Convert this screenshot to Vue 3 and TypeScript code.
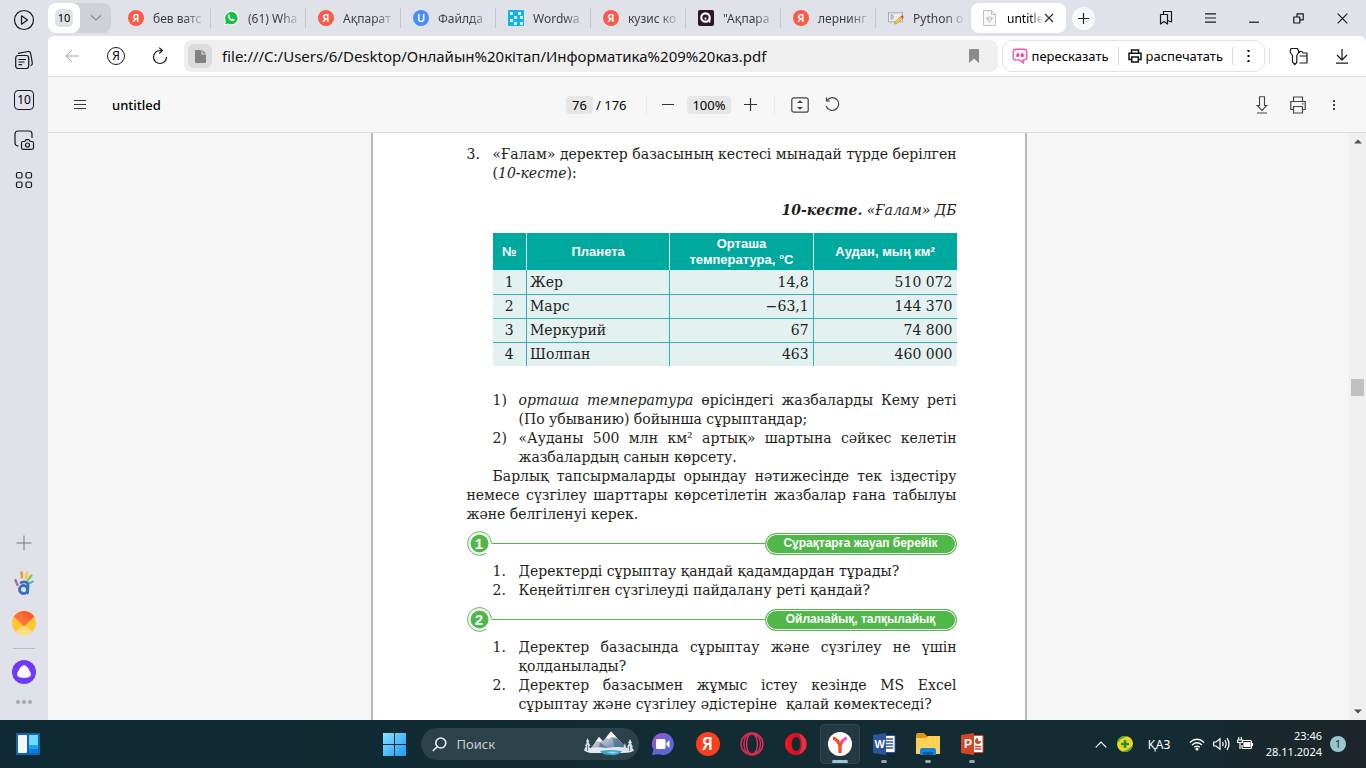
<script setup lang="ts">
import { ref } from 'vue'

type TabIcon = 'ya' | 'whatsapp' | 'u' | 'wordwall' | 'quiz' | 'python'
interface Tab { title: string; icon: TabIcon }
interface Planet { name: string; temp: string; area: string }

const tabs: Tab[] = [
  { title: 'бев ватс', icon: 'ya' },
  { title: '(61) Wha', icon: 'whatsapp' },
  { title: 'Ақпарат', icon: 'ya' },
  { title: 'Файлда', icon: 'u' },
  { title: 'Wordwa', icon: 'wordwall' },
  { title: 'кузис ко', icon: 'ya' },
  { title: '"Ақпара', icon: 'quiz' },
  { title: 'лернинг', icon: 'ya' },
  { title: 'Python о', icon: 'python' },
]

const planets: Planet[] = [
  { name: 'Жер', temp: '14,8', area: '510 072' },
  { name: 'Марс', temp: '−63,1', area: '144 370' },
  { name: 'Меркурий', temp: '67', area: '74 800' },
  { name: 'Шолпан', temp: '463', area: '460 000' },
]

const address = ref('file:///C:/Users/6/Desktop/Онлайын%20кітап/Информатика%209%20каз.pdf')
const page = ref('76')
const query = ref('')
</script>

<template>
  <div class="desktop">
    <div class="browser">
      <aside class="rail">
        <button class="rail-btn" aria-label="Видео"><svg width="22" height="22" viewBox="0 0 22 22" class="ln"><circle cx="11" cy="11" r="9.5" /><path d="M8.5 6.8v8.4l6-4.2z" /></svg></button>
        <button class="rail-btn" aria-label="Лента"><svg width="20" height="20" viewBox="0 0 20 20" class="ln"><rect x="1.7" y="5.5" width="13" height="13" rx="2.5" /><path d="M4.5 9.5h7.5M4.5 12h6M4.5 14.7h3.5M4 3.3l10-1.8q2.3-.3 2.7 2l1.6 9.5q.2 2-1.6 2.7" /></svg></button>
        <button class="rail-btn" aria-label="Вкладки"><span class="count">10</span></button>
        <button class="rail-btn" aria-label="Скриншот"><svg width="22" height="22" viewBox="0 0 22 22" class="ln"><path d="M5.5 17H5a3 3 0 0 1-3-3V5a3 3 0 0 1 3-3h11a3 3 0 0 1 3 3v4" /><path d="M10 12.5h1.8l1.1-1.8h3.2l1.1 1.8H19q1.5 0 1.5 1.5v4.8q0 1.5-1.5 1.5h-9q-1.500 0-1.500-1.500V14q0-1.500 1.500-1.500z" /><circle cx="14.500" cy="16" r="2" /></svg></button>
        <button class="rail-btn" aria-label="Сервисы"><svg width="18" height="18" viewBox="0 0 18 18" class="ln"><rect x="1.500" y="1.500" width="5.500" height="5.500" rx="1.500" /><rect x="11" y="1.500" width="5.500" height="5.500" rx="1.500" /><rect x="1.500" y="11" width="5.500" height="5.500" rx="1.500" /><rect x="11" y="11" width="5.500" height="5.500" rx="1.500" /></svg></button>
        <span class="grow"></span>
        <button class="rail-btn" aria-label="Добавить"><svg width="16" height="16" viewBox="0 0 16 16" stroke="#777b80"><path d="M8 .5v15M.5 8h15" /></svg></button>
        <button class="rail-btn" aria-label="Закладка">
          <svg width="20" height="26" viewBox="0 0 20 26" fill="none" stroke-linecap="round">
            <path d="M7.500 2.500l.5 5" stroke="#ec9a3c" stroke-width="2.600" /><path d="M13 2.500l-1 5.500" stroke="#f5cf34" stroke-width="2.600" /><path d="M17.500 5.500l-3.500 4.500" stroke="#8bc34a" stroke-width="2.200" /><path d="M19 11.500l-3 1.500" stroke="#4cb8e6" stroke-width="2" /><path d="M1.500 10l2 5" stroke="#a36bb0" stroke-width="2.400" />
            <ellipse cx="9.500" cy="19.500" rx="4" ry="4" stroke="#3a70b8" stroke-width="2.800" /><path d="M7 12.500q7.500-2.500 7 4l-.5 6.500" stroke="#3a70b8" stroke-width="2.800" />
          </svg>
        </button>
        <button class="rail-btn" aria-label="Почта">
          <svg width="24" height="24" viewBox="0 0 24 24"><defs><clipPath id="mailClip"><circle cx="12" cy="12" r="12" /></clipPath><linearGradient id="mailTop" x1="1" y1="0" x2="0" y2="1"><stop offset="0" stop-color="#ff4a1c" /><stop offset="1" stop-color="#ff9150" /></linearGradient></defs>
            <g clip-path="url(#mailClip)"><path d="M0 0h24v24H0z" fill="#ffc82e" /><path d="M0 24l12-10 12 10z" fill="#ffdf80" /><path d="M0 4L12 15.500 24 4V0H0z" fill="url(#mailTop)" /></g></svg>
        </button>
        <span class="rail-rule"></span>
        <button class="rail-btn" aria-label="Алиса"><svg width="24" height="24" viewBox="0 0 24 24"><circle cx="12" cy="12" r="12" fill="#7037fc" /><path d="M12 5c2.500 0 7 7 7 9.600 0 2.400-3.500 3.400-7 3.400s-7-1-7-3.400C5 12 9.500 5 12 5z" fill="#fff" /></svg></button>
        <button class="rail-btn low" aria-label="Ещё"><svg width="16" height="4" viewBox="0 0 16 4" fill="#a6aaae"><circle cx="2" cy="2" r="2" /><circle cx="8" cy="2" r="2" /><circle cx="14" cy="2" r="2" /></svg></button>
      </aside>

      <div class="main">
        <nav class="tabs">
          <div class="group">
            <button class="group-count"><span>10</span></button>
            <button class="group-arrow" aria-label="Группы вкладок"><svg width="12" height="8" viewBox="0 0 12 8" fill="none" stroke="#85898e" stroke-width="1.200"><path d="M1 1.500l5 4.500 5-4.500" /></svg></button>
          </div>
          <button v-for="(tab, i) in tabs" :key="i" class="tab">
            <span v-if="tab.icon === 'ya'" class="disc red">Я</span>
            <span v-else-if="tab.icon === 'u'" class="disc blue">U</span>
            <svg v-else-if="tab.icon === 'whatsapp'" width="16" height="16" viewBox="0 0 16 16"><path d="M1 15.500l1-4A7.300 7.300 0 1 1 5 14.500z" fill="#fff" /><path d="M2.200 14.200l.8-3A6.200 6.200 0 1 1 5.200 13.400z" fill="#13c143" /><path d="M4.900 5.300q.7-1.300 1.300-.8l.8 1.700-.7.900q.8 1.700 2.500 2.400l.9-.9 1.900.9q.1 1.500-1.500 1.800C7.500 11.400 4.300 8 4.900 5.300z" fill="#fff" /></svg>
            <svg v-else-if="tab.icon === 'wordwall'" width="16" height="16" viewBox="0 0 16 16"><rect width="16" height="16" rx="1" fill="#12b2f0" /><g fill="#d9f4ff"><path d="M2 2h3v3H2zM10 2h3v3h-3zM6 6h3v3H6zM2 9h3v3H2zM12 6h3v3h-3zM6 12h3v3H6zM12 12h3v3h-3z" /></g></svg>
            <svg v-else-if="tab.icon === 'quiz'" width="16" height="16" viewBox="0 0 16 16"><rect width="16" height="16" rx="2" fill="#2d132c" /><circle cx="7.500" cy="7.500" r="4.200" fill="none" stroke="#fff" stroke-width="2.200" /><path d="M11.500 9v3.500M7.500 7.500v2" stroke="#fff" stroke-width="1.800" /></svg>
            <svg v-else width="17" height="16" viewBox="0 0 17 16"><rect x=".5" y="2.500" width="15" height="9.500" fill="#eceeef" stroke="#a3a7ab" /><path d="M2.500 5h3M2.500 7h4M2.500 9h3" stroke="#90959a" /><path d="M7 14.500l.6-2.700 6.500-6 2 2-6.400 6z" fill="#f1c93b" stroke="#b28a2a" stroke-width=".6" /><path d="M13.300 6.500l1.500-1.500 2 2-1.500 1.500z" fill="#d84a3d" /></svg>
            <span class="tab-title">{{ tab.title }}</span>
          </button>
          <div class="tab active">
            <svg width="13" height="16" viewBox="0 0 13 16" fill="none" stroke="#bfc3c7"><path d="M.5.500h8l4 4v11H.5z" fill="#f7f7f7" /><path d="M8.500.500v4h4" /><path d="M3.500 8q3-2.500 6 0L6.500 12.500zM3.500 8l3 1.500 3-1.500" /></svg>
            <span class="tab-title">untitle</span>
            <button class="tab-close" aria-label="Закрыть вкладку"><svg width="10" height="10" viewBox="0 0 10 10" stroke="#2c2f33" stroke-width="1.200"><path d="M1 1l8 8M9 1L1 9" /></svg></button>
          </div>
          <button class="new-tab" aria-label="Новая вкладка"><svg width="11" height="11" viewBox="0 0 11 11" stroke="#24272b" stroke-width="1.200"><path d="M5.500 0v11M0 5.500h11" /></svg></button>
          <span class="grow"></span>
          <div class="window-btns">
            <button aria-label="Закладки"><svg width="14" height="16" viewBox="0 0 14 16" class="ln"><path d="M1.500 4.500h7V14L5 11.500 1.500 14z" /><path d="M4.500 4.500V1.500h8V12l-4-1.500" /></svg></button>
            <button aria-label="Меню"><svg width="11" height="10" viewBox="0 0 11 10" class="ln"><path d="M0 .8h11M0 5h11M0 9.200h11" /></svg></button>
            <button aria-label="Свернуть"><svg width="10" height="10" viewBox="0 0 10 10" class="ln"><path d="M0 9.200h10" /></svg></button>
            <button aria-label="Окно"><svg width="11" height="11" viewBox="0 0 11 11" class="ln"><path d="M.8 4h6v6h-6zM4 4V.8h6.200v6H6.800" /></svg></button>
            <button aria-label="Закрыть"><svg width="11" height="11" viewBox="0 0 11 11" class="ln"><path d="M.7.700l9.600 9.600M10.300.700L.7 10.300" /></svg></button>
          </div>
        </nav>

        <div class="toolbar">
          <button class="tool" aria-label="Назад"><svg width="14" height="14" viewBox="0 0 14 14" fill="none" stroke="#a9a9a9"><path d="M14 7H1M7 1L1 7l6 6" /></svg></button>
          <button class="tool" aria-label="Яндекс"><span class="ya-ring">Я</span></button>
          <button class="tool" aria-label="Обновить"><svg width="16" height="18" viewBox="0 0 16 18" class="ln"><path d="M9.500 3.500H8a6.500 6.500 0 1 0 6.500 6.500M7.200.600l3.300 2.900-3.300 3" /></svg></button>
          <div class="address">
            <button class="file" aria-label="Сведения о файле"><svg width="11" height="13" viewBox="0 0 11 13"><path d="M1 0h5.500v4.500H11V12a1 1 0 0 1-1 1H1a1 1 0 0 1-1-1V1a1 1 0 0 1 1-1z" fill="#828282" /><path d="M7.500 0L11 3.500H7.500z" fill="#828282" /></svg></button>
            <input v-model="address" aria-label="Адрес" spellcheck="false" />
            <button class="mark" aria-label="В закладки"><svg width="10" height="14" viewBox="0 0 10 14"><path d="M1 0h8q1 0 1 1v13l-5-4.500L0 14V1q0-1 1-1z" fill="#8b8b8b" /></svg></button>
          </div>
          <div class="actions">
            <button class="act"><svg width="16" height="16" viewBox="0 0 16 16" fill="none"><path d="M4 1.200h8q2.800 0 2.800 2.600v5.500q0 2.600-2.800 2.600h-1l.2 3-3.500-3H4q-2.800 0-2.800-2.600V3.800q0-2.600 2.800-2.600z" stroke="#ef57b6" stroke-width="1.400" /><path d="M7 4.500Q4.300 5 4.500 8.500h2.600V6.300H5.900M11.400 4.500Q8.700 5 8.900 8.500h2.600V6.300h-1.200" fill="#f0429e" stroke="#f0429e" stroke-width=".6" /></svg>пересказать</button>
            <button class="act print"><svg width="14" height="14" viewBox="0 0 14 14" fill="none" stroke="#111" stroke-width="1.500"><path d="M3.500 4V1h7v3M3 10.500H1V4.200h12v6.300h-2" /><path d="M3.700 8h6.600v5H3.700z" fill="#fff" /></svg>распечатать</button>
            <button class="act dots" aria-label="Ещё"><svg width="3" height="12" viewBox="0 0 3 12"><path d="M.5 0h2v2h-2zM.5 5h2v2h-2zM.5 10h2v2h-2z" /></svg></button>
          </div>
          <span class="split"></span>
          <button class="tool key" aria-label="Пароли"><svg width="19" height="19" viewBox="0 0 19 19" class="ln"><path d="M2 1.500h6.500L10 5 7.800 8.500v7L5.800 17.500 3.500 15.200V8.500L1 5z" /><path d="M10.500 6V4.500h2.500l1 1.500h4v10h-7.500M10.500 9H18" /></svg></button>
          <button class="tool" aria-label="Загрузки"><svg width="12" height="15" viewBox="0 0 12 15" class="ln"><path d="M6 0v11M1 6l5 5 5-5M0 14.200h12" /></svg></button>
        </div>

        <div class="pdf-bar">
          <div class="pdf-left">
            <button aria-label="Боковая панель"><svg width="12" height="9" viewBox="0 0 12 9" stroke="#333"><path d="M0 .5h12M0 4.500h12M0 8.500h12" /></svg></button>
            <h1>untitled</h1>
          </div>
          <div class="pdf-mid">
            <input v-model="page" class="page-no" aria-label="Страница" />
            <span class="of">/ 176</span>
            <span class="bar-line"></span>
            <button class="zoom" aria-label="Уменьшить"><svg width="12" height="2" viewBox="0 0 12 2" fill="#333"><path d="M0 0h12v1H0z" /></svg></button>
            <span class="percent">100%</span>
            <button class="zoom" aria-label="Увеличить"><svg width="13" height="13" viewBox="0 0 13 13" stroke="#333" stroke-width="1.200"><path d="M6.500 0v13M0 6.500h13" /></svg></button>
            <span class="bar-line wide"></span>
            <button class="fit" aria-label="По размеру страницы"><svg width="18" height="16" viewBox="0 0 18 16" fill="none" stroke="#444" stroke-width="1.200"><rect x=".8" y=".8" width="16.400" height="14.400" rx="2" /><path d="M7.500 5.500L9 4l1.500 1.500zM7.500 10.500L9 12l1.500-1.500z" fill="#111" /></svg></button>
            <button class="fit" aria-label="Повернуть"><svg width="15" height="15" viewBox="0 0 15 15" fill="none" stroke="#444" stroke-width="1.200"><path d="M2 3.500A6.400 6.400 0 1 1 1.200 9M1.500.500v3.500H5" /></svg></button>
          </div>
          <div class="pdf-right">
            <button aria-label="Скачать"><svg width="12" height="18" viewBox="0 0 12 18" fill="none" stroke="#444" stroke-width="1.100"><path d="M3.500.700h5v8.800h2.300L6 14.500 1.200 9.500h2.300zM1 17h10" /></svg></button>
            <button aria-label="Печать"><svg width="16" height="18" viewBox="0 0 16 18" fill="none" stroke="#444" stroke-width="1.200"><path d="M3.500 5.500V1h9v4.500M3 13.500H.8v-8h14.400v8H13M3.500 10.500h9V17h-9zM12 7.800h1.500" /></svg></button>
            <button aria-label="Действия"><svg width="2" height="10" viewBox="0 0 2 10" fill="#444"><path d="M0 0h2v2H0zM0 4h2v2H0zM0 8h2v2H0z" /></svg></button>
          </div>
        </div>

        <div class="viewer">
          <div class="canvas">
            <article class="sheet">
              <div class="task">
                <span class="num">3.</span>
                <p><span class="just">«Ғалам» деректер базасының кестесі мынадай түрде берілген</span><span class="row">(<i>10-кесте</i>):</span></p>
              </div>
              <p class="caption"><b>10-кесте.</b> «Ғалам» ДБ</p>
              <table>
                <colgroup><col class="c1" /><col class="c2" /><col class="c3" /><col class="c4" /></colgroup>
                <thead><tr><th>№</th><th>Планета</th><th>Орташа<br />температура, °С</th><th>Аудан, мың км²</th></tr></thead>
                <tbody>
                  <tr v-for="(p, i) in planets" :key="p.name"><td>{{ i + 1 }}</td><td>{{ p.name }}</td><td>{{ p.temp }}</td><td>{{ p.area }}</td></tr>
                </tbody>
              </table>
              <ol class="items first">
                <li><span class="num">1)</span><p><span class="just"><i>орташа температура</i> өрісіндегі жазбаларды Кему реті</span><span class="row">(По убыванию) бойынша сұрыптаңдар;</span></p></li>
                <li><span class="num">2)</span><p><span class="just">«Ауданы 500 млн км² артық» шартына сәйкес келетін</span><span class="row">жазбалардың санын көрсету.</span></p></li>
              </ol>
              <p class="para"><span class="just indent">Барлық тапсырмаларды орындау нәтижесінде тек іздестіру</span><span class="just">немесе сүзгілеу шарттары көрсетілетін жазбалар ғана табылуы</span><span class="row">және белгіленуі керек.</span></p>
              <div class="section">
                <span class="badge"><svg width="25" height="25" viewBox="0 0 25 25"><path d="M24.300 12.500A11.800 11.800 0 1 0 19 22.300" fill="none" stroke="#50b848" /><circle cx="12.500" cy="12.500" r="9" fill="#50b848" /></svg><b>1</b></span>
                <span class="wire"></span><h2>Сұрақтарға жауап берейік</h2>
              </div>
              <ol class="items">
                <li><span class="num">1.</span><p>Деректерді сұрыптау қандай қадамдардан тұрады?</p></li>
                <li><span class="num">2.</span><p>Кеңейтілген сүзгілеуді пайдалану реті қандай?</p></li>
              </ol>
              <div class="section">
                <span class="badge"><svg width="25" height="25" viewBox="0 0 25 25"><path d="M24.300 12.500A11.800 11.800 0 1 0 19 22.300" fill="none" stroke="#50b848" /><circle cx="12.500" cy="12.500" r="9" fill="#50b848" /></svg><b>2</b></span>
                <span class="wire"></span><h2>Ойланайық, талқылайық</h2>
              </div>
              <ol class="items">
                <li><span class="num">1.</span><p><span class="just">Деректер базасында сұрыптау және сүзгілеу не үшін</span><span class="row">қолданылады?</span></p></li>
                <li><span class="num">2.</span><p><span class="just">Деректер базасымен жұмыс істеу кезінде MS Excel</span><span class="row">сұрыптау және сүзгілеу әдістеріне&nbsp; қалай көмектеседі?</span></p></li>
              </ol>
            </article>
          </div>
          <div class="scroll">
            <svg width="8" height="5" viewBox="0 0 8 5" fill="#505050"><path d="M0 4.500L4 .500l4 4z" /></svg>
            <span class="above"></span><span class="thumb"></span><span class="below"></span>
            <svg width="8" height="5" viewBox="0 0 8 5" fill="#505050"><path d="M0 .500l4 4 4-4z" /></svg>
          </div>
        </div>
      </div>
    </div>

    <footer class="taskbar">
      <div class="tb-left"><button class="tile" aria-label="Виджеты"><svg width="24" height="22" viewBox="0 0 24 22"><rect width="24" height="22" rx="1" fill="#1266b4" /><rect x="2" y="2" width="9" height="18" rx="1" fill="#f5f7fa" /><rect x="13" y="2" width="9" height="10" fill="#6fd8ff" /><path d="M13 12h9v4h-9z" fill="#1ba5f0" /><path d="M13 16h9v4h-9z" fill="#0a7fdc" /></svg></button></div>
      <div class="tb-mid">
        <button class="tile" aria-label="Пуск"><svg width="23" height="23" viewBox="0 0 23 23"><defs><linearGradient id="win" x1="0" y1="0" x2="1" y2="1" gradientUnits="objectBoundingBox"><stop offset="0" stop-color="#8be3ff" /><stop offset="1" stop-color="#159cf5" /></linearGradient></defs><path d="M0 0h11v11H0zM12 0h11v11H12zM0 12h11v11H0zM12 12h11v11H12z" fill="url(#win)" /></svg></button>
        <label class="search">
          <svg width="15" height="15" viewBox="0 0 15 15" fill="none" stroke="#e8edef" stroke-width="1.600"><circle cx="8.800" cy="6" r="5" /><path d="M5.200 9.700L.8 14" /></svg>
          <input v-model="query" placeholder="Поиск" aria-label="Поиск" />
          <svg width="50" height="26" viewBox="0 0 50 26">
            <defs><linearGradient id="peak" x1="0" y1="0" x2="1" y2="1"><stop offset="0" stop-color="#f8e2cf" /><stop offset=".5" stop-color="#a9b7ca" /><stop offset="1" stop-color="#3f668c" /></linearGradient></defs>
            <path d="M7 17L15 6l4 4 8-9.500L44 18z" fill="url(#peak)" /><path d="M27 .500L22 7l3 1 2-2 3 3 3-2zM15 6l-3.500 5 3-1 2 1.500 1.500-2z" fill="#fff4e8" /><path d="M28 6l3 11h11L33 7zM16 11l-1 6h8z" fill="#486c91" opacity=".7" />
            <path d="M0 19q8-4 23-2 15-3 27 2-1 3-12 3H7Q1 21 0 19z" fill="#e4e8f3" /><path d="M16 20q9-2 22 0-3 5-12 4-8 0-10-4z" fill="#3ca3ce" /><path d="M22 21q6-1 12 0l-5 2z" fill="#8adce4" />
            <path d="M3.500 7l2 4-1 0 2 4H5l2 4H0l2-4H1l2-4H2zM46 8l2 4-1 0 2 4-1 0 2 4h-8l2-4-1 0 2-4-1 0zM41 12l2 8h-5z" fill="#d4dcee" /><path d="M3.500 14v6M45.500 15v5" stroke="#6b7b9e" />
          </svg>
        </label>
        <button class="tile" aria-label="Чат"><svg width="24" height="24" viewBox="0 0 24 24"><defs><linearGradient id="chat" x1="0" y1="0" x2="1" y2="1"><stop offset="0" stop-color="#a855c8" /><stop offset=".5" stop-color="#6563d3" /><stop offset="1" stop-color="#5865e0" /></linearGradient></defs><path d="M12 1a11 11 0 1 1-4 21.300L1 23l1.400-5.500A11 11 0 0 1 12 1z" fill="url(#chat)" /><rect x="5" y="7" width="9.500" height="10" rx="1.500" fill="#fff" /><path d="M15.500 11l3-3v8l-3-3z" fill="#fff" /></svg></button>
        <button class="tile wide-gap" aria-label="Яндекс"><span class="disc big">Я</span></button>
        <button class="tile" aria-label="Opera GX"><svg width="24" height="24" viewBox="0 0 24 24" fill="none" stroke="#e52b55" stroke-width="1.400"><circle cx="12" cy="12" r="11" /><ellipse cx="12" cy="12" rx="5.500" ry="10.500" /><path d="M9 2q11-1 11.500 10Q20 23 9 22M8 2.500q-4 3-4 9.500t4 9.500" /></svg></button>
        <button class="tile" aria-label="Opera"><svg width="24" height="24" viewBox="0 0 24 24"><defs><linearGradient id="op" x1="0" y1="0" x2="1" y2="0"><stop offset="0" stop-color="#f51225" /><stop offset="1" stop-color="#b5101c" /></linearGradient></defs><path d="M12 1a11 11 0 1 0 0 22 11 11 0 0 0 0-22zm0 4c2.800 0 4.300 3.300 4.300 7s-1.500 7-4.300 7-4.300-3.300-4.300-7S9.200 5 12 5z" fill="url(#op)" fill-rule="evenodd" /><path d="M14 1.300a11 11 0 0 1 0 21.400c5-4 5-17.400 0-21.400z" fill="#f2555d" opacity=".55" /></svg></button>
        <button class="tile current" aria-label="Яндекс Браузер"><svg width="24" height="24" viewBox="0 0 24 24"><defs><linearGradient id="yb" x1="0" y1="0" x2="1" y2="0"><stop offset=".4" stop-color="#fb4a1e" /><stop offset="1" stop-color="#ee5ef0" /></linearGradient></defs><circle cx="12" cy="12" r="12" fill="#fff" /><path d="M5 6.500h1.500Q10.500 9 12 13.500 13.500 9 17.500 6.500H19" fill="none" stroke="url(#yb)" stroke-width="3.200" /><path d="M12 12v9" stroke="#fb4a1e" stroke-width="3.200" /></svg></button>
        <button class="tile open" aria-label="Word"><svg width="24" height="24" viewBox="0 0 24 24"><path d="M12 3.500h11v17H12z" fill="#fff" stroke="#2b579a" /><path d="M14 7h7M14 10h7M14 13h7M14 16h7" stroke="#2b579a" stroke-width="1.400" /><path d="M1 3l13-2v22L1 21z" fill="#2b579a" /><text x="2.500" y="16" font-size="11">W</text></svg></button>
        <button class="tile open" aria-label="Проводник"><svg width="26" height="24" viewBox="0 0 26 24"><path d="M1 3q0-2 2-2h6l3 3h12q1 0 1 1v3H1z" fill="#d99a14" /><path d="M1 6h10l3-2h11v18H1z" fill="#ffd257" /><path d="M5 23v-5q0-2 2-2h12q2 0 2 2v5z" fill="#1683d8" /><path d="M8 23v-3h10v3z" fill="#0b5fb0" /></svg></button>
        <button class="tile open" aria-label="PowerPoint"><svg width="24" height="24" viewBox="0 0 24 24"><path d="M12 3.500h11v17H12z" fill="#fff" stroke="#d24726" /><circle cx="18" cy="9" r="3" fill="#d24726" /><path d="M18 9V6h3v3z" fill="#fff" /><path d="M15 14.500h6M15 17h6" stroke="#d24726" stroke-width="1.300" /><path d="M1 3l13-2v22L1 21z" fill="#d24726" /><text x="4" y="16" font-size="12">P</text></svg></button>
      </div>
      <div class="tb-right">
        <button class="tray" aria-label="Скрытые значки"><svg width="12" height="7" viewBox="0 0 12 7" class="wl"><path d="M.7 6.300L6 1l5.300 5.300" /></svg></button>
        <button class="tray" aria-label="Антивирус"><svg width="16" height="16" viewBox="0 0 16 16"><circle cx="8" cy="8" r="8" fill="#eed629" /><path d="M0 8A8 8 0 0 1 11 .600Q3 2 0 8zM16 8a8 8 0 0 1-11 7.400Q13 14 16 8z" fill="#4aa53a" /><path d="M6.700 4h2.600v2.700H12v2.600H9.300V12H6.700V9.300H4V6.700h2.700z" fill="#23932b" /></svg></button>
        <button class="lang">ҚАЗ</button>
        <button class="tray" aria-label="Сеть"><svg width="16" height="13" viewBox="0 0 16 13" class="wl"><path d="M.8 4.500q7.200-6.500 14.400 0M3 7q5-4.500 10 0M5.200 9.300q2.800-2.300 5.600 0" /><circle cx="8" cy="11" r="1" fill="#fff" /></svg></button>
        <button class="tray" aria-label="Звук"><svg width="17" height="14" viewBox="0 0 17 14" class="wl"><path d="M.7 5v4H3l4 3.300V1.700L3 5zM9.500 5q1.300 2 0 4M11.800 3q2.700 4 0 8M14 1.200q4 5.800 0 11.600" /></svg></button>
        <button class="tray" aria-label="Батарея"><svg width="17" height="14" viewBox="0 0 17 14" class="wl"><path d="M6 3.500h7.500q1 0 1 1v6q0 1-1 1H6q-1 0-1-1V8" /><path d="M7 5.500h6v4H7z" fill="#fff" /><path d="M15.500 6v3M1.700 0v3M4.300 0v3M.5 3h5v2.500h-5zM3 5v7" /></svg></button>
        <button class="clock"><time>23:46</time><time>28.11.2024</time></button>
        <button class="note" aria-label="Уведомления: 1">1</button>
      </div>
    </footer>
  </div>
</template>

<style>
body { margin: 0; }
</style>

<style scoped>
* { box-sizing: border-box; }
.desktop { height: 100vh; display: flex; flex-direction: column; overflow: hidden; background: #dfe2e8; font-family: "Noto Sans", "Open Sans", sans-serif; color: #000; }
button { border: 0; background: none; padding: 0; margin: 0; font: inherit; color: inherit; display: flex; align-items: center; justify-content: center; flex: none; }
input { border: 0; outline: 0; padding: 0; margin: 0; background: none; font: inherit; color: inherit; min-width: 0; }
svg { flex: none; display: block; }
.ln { fill: none; stroke: #16181b; stroke-width: 1.2; stroke-linejoin: round; }
.wl { fill: none; stroke: #fff; stroke-width: 1.2; }
.grow { flex: 1; }
.browser { flex: 1; min-height: 0; display: flex; }

.rail { width: 48px; flex: none; display: flex; flex-direction: column; align-items: center; padding-bottom: 8px; }
.rail-btn { width: 40px; height: 40px; }
.rail-btn.low { height: 20px; }
.rail-rule { width: 22px; height: 1px; margin: 5px 0 3px; background: #bcc0c5; }
.count { width: 20px; height: 20px; border: 1px solid #16181b; border-radius: 4px; font-size: 12px; line-height: 18px; text-align: center; }

.main { flex: 1; min-width: 0; display: flex; flex-direction: column; }
.tabs { height: 36px; display: flex; align-items: center; font-size: 12px; }
.group { display: flex; width: 63px; height: 30px; margin-right: 5px; border-radius: 8px; background: #ced1d6; }
.group-count { width: 32px; border-radius: 8px; background: #fff; }
.group-count span { width: 18px; height: 18px; border-radius: 5px; background: #dfe2e8; font-size: 11px; line-height: 18px; text-align: center; }
.group-arrow { flex: 1; }
.tab { width: 95px; height: 30px; padding: 0 5px 0 12px; gap: 9px; justify-content: flex-start; position: relative; color: #3d4146; display: flex; align-items: center; flex: none; }
.tab:not(.active)::after { content: ""; position: absolute; right: 0; top: 5px; width: 1px; height: 20px; background: #c3c7cc; }
.tab:nth-child(10)::after { display: none; }
.tab > svg, .tab .disc { width: 16px; flex: none; }
.tab-title { flex: 1; min-width: 0; overflow: hidden; white-space: nowrap; text-align: left; mask-image: linear-gradient(to right, #000 60%, transparent); }
.tab.active { background: #fff; border-radius: 8px; color: #000; padding-right: 12px; gap: 0; }
.tab.active > svg { width: 13px; }
.tab.active .tab-title { margin-left: 11px; }
.disc { width: 16px; height: 16px; border-radius: 50%; color: #fff; font-size: 11px; font-weight: 600; line-height: 16px; text-align: center; }
.disc.red { background: #fc5a46; }
.disc.blue { background: #4a8bfa; }
.disc.big { width: 24px; height: 24px; background: #fc3f1d; font-size: 17px; line-height: 24px; }
.new-tab { width: 23px; height: 23px; margin-left: 6px; border-radius: 50%; background: #f8f9fa; }
.window-btns { display: flex; padding-right: 2px; }
.window-btns button { width: 44px; height: 36px; }

.toolbar { height: 41px; display: flex; align-items: center; padding-left: 2px; padding-right: 2px; background: #fff; border-bottom: 1px solid #dcdcdc; border-radius: 6px 6px 0 0; }
.tool { width: 44px; height: 40px; }
.ya-ring { width: 18px; height: 18px; border: 1px solid #16181b; border-radius: 50%; font-size: 12px; line-height: 16px; text-align: center; }
.address { flex: 1; min-width: 0; height: 32px; margin-left: 2px; padding: 0 4px; display: flex; align-items: center; background: #efefef; border-radius: 8px; }
.file { width: 24px; height: 24px; border-radius: 6px; background: #dcdcdc; }
.address input { flex: 1; margin-left: 10px; font-size: 15px; line-height: 24px; color: #111; }
.mark { width: 40px; height: 32px; }
.actions { height: 32px; margin-left: 4px; display: flex; align-items: center; border: 1px solid #e2e2e2; border-radius: 10px; font-size: 13px; }
.act { height: 18px; padding: 0 9px; gap: 4px; }
.act + .act { border-left: 1px solid #dedede; }
.act.dots { width: 32px; padding: 0; }
.split { width: 1px; height: 16px; margin: 0 6px 0 4px; background: #dcdcdc; }

.pdf-bar { height: 56px; flex: none; display: grid; grid-template-columns: 1fr auto 1fr; align-items: center; background: #f7f7f7; border-bottom: 1px solid #dcdcdc; font-size: 13px; }
.pdf-left { display: flex; align-items: center; padding-left: 14px; gap: 14px; }
.pdf-left button, .pdf-right button { width: 36px; height: 36px; }
.pdf-left h1 { margin: 0; font-size: 13px; line-height: 18px; font-weight: 500; }
.pdf-mid { display: flex; align-items: center; }
.page-no { width: 27px; height: 18px; border-radius: 4px; background: #e6e6e6; text-align: center; }
.of { margin-left: 3px; width: 48px; line-height: 18px; }
.bar-line { width: 1px; height: 20px; margin: 0 2px; background: #eaeaea; }
.bar-line.wide { margin: 0 9px 0 5px; }
.zoom { width: 34px; height: 32px; margin: 0 2px; }
.percent { width: 44px; height: 18px; border-radius: 4px; background: #e6e6e6; line-height: 18px; text-align: center; }
.fit { width: 32px; height: 32px; }
.pdf-right { display: flex; justify-content: flex-end; padding-right: 14px; }

.viewer { flex: 1; min-height: 0; display: flex; background: #f6f6f6; }
.canvas { flex: 1; min-width: 0; overflow: hidden; }
.sheet { width: 50.4%; min-width: 656px; min-height: 100%; margin: 0 auto; padding: 12px 68px 20px 94px; background: #fff; border: solid #b8b8b8; border-width: 0 2px; font-family: "DejaVu Serif", "Liberation Serif", serif; font-size: 14px; line-height: 19px; color: #231f20; }
p { margin: 0; }
.just, .row { display: block; white-space: nowrap; }
.just { text-align: justify; text-align-last: justify; }
.indent { padding-left: 26px; }
.task { display: flex; }
.task p, .items p { flex: 1; min-width: 0; }
.num { width: 26px; flex: none; }
.caption { margin: 18px 0 13px; text-align: right; font-style: italic; }
table { width: calc(100% - 26px); margin-left: 26px; table-layout: fixed; border-collapse: collapse; }
.c1 { width: 34px; }
th { height: 37px; padding: 0; background: #00a99d; color: #fff; font-family: "Liberation Sans", sans-serif; font-size: 13px; line-height: 16px; font-weight: 700; }
th + th { border-left: 1px solid #d9f1ef; }
td { height: 24px; padding: 0 4px; background: #e3f1f0; text-align: right; line-height: 20px; }
td + td { border-left: 1px solid #2bb5ab; }
td:first-child { text-align: center; }
td:nth-child(2) { text-align: left; padding-left: 3px; }
tbody tr + tr td { border-top: 1px solid #2bb5ab; }
.items { list-style: none; margin: 0 0 0 26px; padding: 0; }
.items.first { margin-top: 25px; }
.items li { display: flex; }
.section { height: 25px; margin: 7px 0 6px; display: flex; align-items: center; font-family: "Liberation Sans", sans-serif; }
.badge { display: grid; place-items: center; width: 25px; flex: none; }
.badge > * { grid-area: 1 / 1; }
.badge b { color: #fff; font-size: 15px; line-height: 18px; }
.wire { flex: 1; height: 1px; background: #50b848; }
.section h2 { width: 192px; height: 22px; margin: 0; border: 1px solid #50b848; border-radius: 11px; background: #50b848; box-shadow: inset 0 0 0 1px #fff; color: #fff; font-size: 12px; line-height: 19px; font-weight: 700; text-align: center; }

.scroll { width: 17px; display: flex; flex-direction: column; align-items: center; padding: 6px 0; background: #f0f0f0; }
.above { flex: 234; }
.thumb { width: 13px; height: 17px; background: #c1c1c1; }
.below { flex: 311; }

.taskbar { height: 48px; flex: none; display: grid; grid-template-columns: 1fr auto 1fr; align-items: center; background: linear-gradient(to right, #102a33 0%, #132c34 85%, #1d2427 100%); color: #fff; }
.tb-left { padding-left: 8px; }
.tb-mid { display: flex; align-items: center; gap: 4px; }
.tile { width: 40px; height: 40px; border-radius: 4px; position: relative; }
.wide-gap { margin-left: 1px; }
.tile text { fill: #fff; font-family: "Liberation Sans", sans-serif; font-weight: 700; }
.current { background: #243a42; border: 1px solid #2e434a; }
.current::after, .open::after { content: ""; position: absolute; bottom: 1px; left: 50%; transform: translateX(-50%); width: 6px; height: 3px; border-radius: 2px; background: #99a4a8; }
.current::after { width: 16px; bottom: 0; background: #94c9d0; }
.search { width: 218px; height: 32px; margin-left: 2px; padding: 0 5px 0 11px; display: flex; align-items: center; border-radius: 16px; background: #2c424a; }
.search input { flex: 1; margin-left: 10px; font-size: 13px; line-height: 20px; }
.search input::placeholder { color: #c5cdd0; opacity: 1; }
.tb-right { display: flex; align-items: center; justify-content: flex-end; padding-right: 20px; }
.tray { width: 24px; height: 32px; }
.lang { width: 44px; font-size: 12px; }
.lang + .tray { margin-left: 4px; }
.clock { width: 65px; flex-direction: column; align-items: flex-end; font-size: 11px; line-height: 16px; }
.note { width: 16px; height: 16px; margin-left: 8px; border-radius: 50%; background: #96c8cf; color: #1b2d33; font-size: 11px; line-height: 16px; }
</style>
